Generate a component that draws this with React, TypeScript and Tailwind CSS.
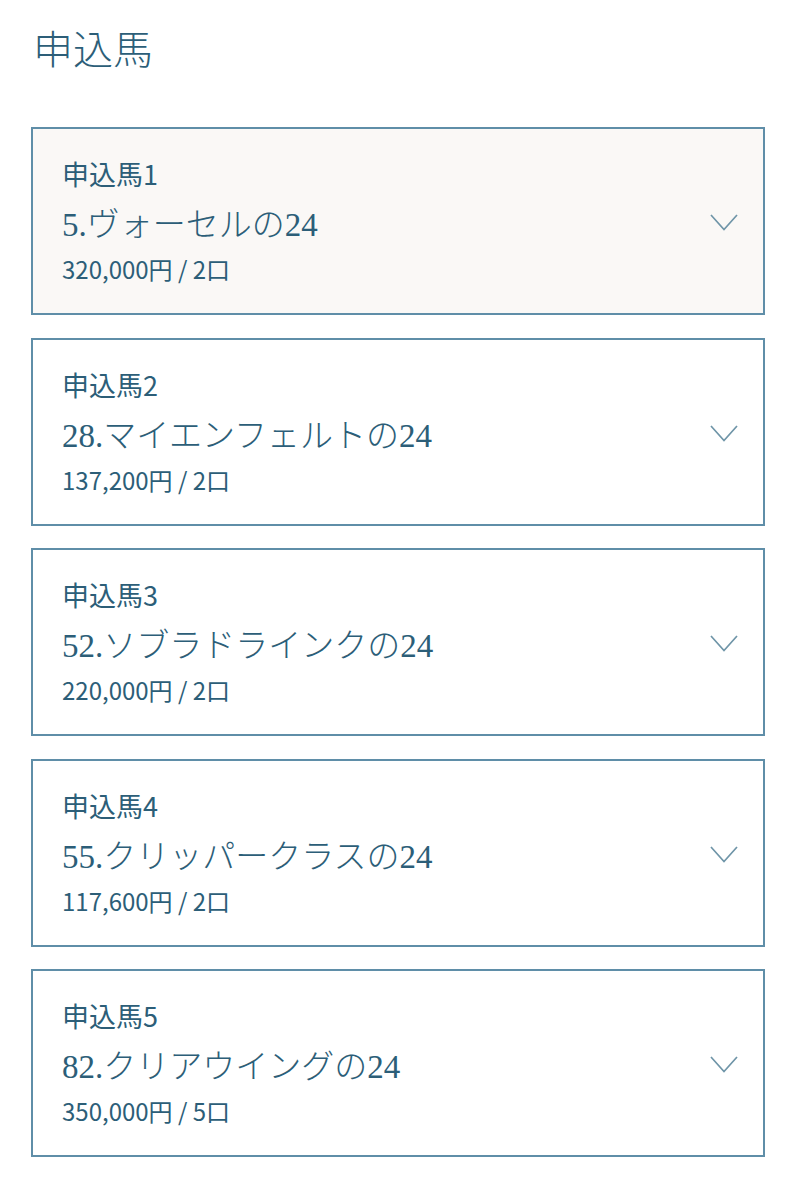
const horses = [
  { no: 1, name: '5.ヴォーセルの24', price: '320,000円 / 2口', active: true },
  { no: 2, name: '28.マイエンフェルトの24', price: '137,200円 / 2口' },
  { no: 3, name: '52.ソブラドラインクの24', price: '220,000円 / 2口' },
  { no: 4, name: '55.クリッパークラスの24', price: '117,600円 / 2口' },
  { no: 5, name: '82.クリアウイングの24', price: '350,000円 / 5口' },
];

const serif = "font-['Liberation_Serif','Noto_Sans_CJK_JP',serif]";

function Chevron() {
  return (
    <svg width="28" height="17" viewBox="0 0 28 17" fill="none" className="shrink-0 mt-[3px]">
      <path d="M1 1 L14 15.5 L27 1" stroke="#6f95a8" strokeWidth="1.7" />
    </svg>
  );
}

export default function App() {
  return (
    <div className="min-h-screen bg-white px-[31px] pt-[22px] pb-10 text-[#2c5e78] font-['Noto_Sans_CJK_JP',sans-serif]">
      <h1 className={`text-[40px] leading-[58px] font-light ${serif} pl-[2px]`}>申込馬</h1>

      <div className="mt-[47px] flex flex-col gap-[22.5px]">
        {horses.map(h => (
          <div
            key={h.no}
            className={`flex items-center justify-between border-2 border-[#5f8ea8] pl-[29px] pr-[25px] h-[188px] ${h.active ? 'bg-[#faf8f6]' : 'bg-white'}`}
          >
            <div className="flex flex-col">
              <p className="text-[27px] leading-[36px]">申込馬{h.no}</p>
              <p className={`mt-[9px] text-[33px] leading-[48px] font-light ${serif}`}>{h.name}</p>
              <p className="mt-[3px] text-[24px] leading-[34px]">{h.price}</p>
            </div>
            <Chevron />
          </div>
        ))}
      </div>
    </div>
  );
}
